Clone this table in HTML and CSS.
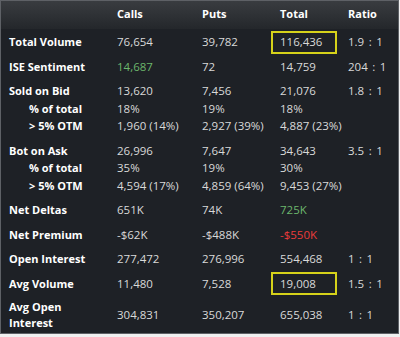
FILE: index.html
```html
<!DOCTYPE html>
<html>
<head>
<meta charset="utf-8">
<link rel="stylesheet" href="styles.css">
</head>
<body>
<div class="panel">
  <div class="row head">
    <div class="lbl"></div>
    <div>Calls</div><div>Puts</div><div>Total</div><div>Ratio</div>
  </div>
  <div class="group">
    <div class="row"><div class="lbl">Total Volume</div><div>76,654</div><div>39,782</div><div><span class="box">116,436</span></div><div class="ratio">1.9 : 1</div></div>
  </div>
  <div class="group">
    <div class="row"><div class="lbl">ISE Sentiment</div><div class="green">14,687</div><div>72</div><div>14,759</div><div class="ratio">204 : 1</div></div>
  </div>
  <div class="group">
    <div class="row"><div class="lbl">Sold on Bid</div><div>13,620</div><div>7,456</div><div>21,076</div><div class="ratio">1.8 : 1</div></div>
    <div class="row"><div class="lbl sub">% of total</div><div>18%</div><div>19%</div><div>18%</div><div></div></div>
    <div class="row"><div class="lbl sub">&gt; 5% OTM</div><div>1,960 (14%)</div><div>2,927 (39%)</div><div>4,887 (23%)</div><div></div></div>
  </div>
  <div class="group">
    <div class="row"><div class="lbl">Bot on Ask</div><div>26,996</div><div>7,647</div><div>34,643</div><div class="ratio">3.5 : 1</div></div>
    <div class="row"><div class="lbl sub">% of total</div><div>35%</div><div>19%</div><div>30%</div><div></div></div>
    <div class="row"><div class="lbl sub">&gt; 5% OTM</div><div>4,594 (17%)</div><div>4,859 (64%)</div><div>9,453 (27%)</div><div></div></div>
  </div>
  <div class="group">
    <div class="row"><div class="lbl">Net Deltas</div><div>651K</div><div>74K</div><div class="green">725K</div><div></div></div>
  </div>
  <div class="group">
    <div class="row"><div class="lbl">Net Premium</div><div>-$62K</div><div>-$488K</div><div class="red">-$550K</div><div></div></div>
  </div>
  <div class="group">
    <div class="row"><div class="lbl">Open Interest</div><div>277,472</div><div>276,996</div><div>554,468</div><div class="ratio">1 : 1</div></div>
  </div>
  <div class="group">
    <div class="row"><div class="lbl">Avg Volume</div><div>11,480</div><div>7,528</div><div><span class="box">19,008</span></div><div class="ratio">1.5 : 1</div></div>
  </div>
  <div class="group">
    <div class="row two"><div class="lbl">Avg Open<br>Interest</div><div>304,831</div><div>350,207</div><div>655,038</div><div class="ratio">1 : 1</div></div>
  </div>
</div>
</body>
</html>
```
FILE: styles.css
```css
html, body {
  margin: 0;
  padding: 0;
  background: #f0f0f0;
}
.panel {
  width: 397px;
  height: 332px;
  border: 1px solid #5e6166;
  background: #1e2126;
  font-family: "Open Sans", "DejaVu Sans", sans-serif;
  font-size: 11.5px;
  color: #d9d9d9;
  overflow: hidden;
}
.row {
  display: grid;
  grid-template-columns: 116px 85px 78px 68px 1fr;
  height: 17.5px;
  line-height: 17.5px;
  align-items: center;
  white-space: nowrap;
}
.head {
  height: 25px;
  line-height: 25px;
  background: linear-gradient(#393c40, #24272b);
  color: #ffffff;
  font-weight: bold;
  font-size: 11px;
  padding-bottom: 3px;
}
.group {
  padding-top: 4.25px;
  padding-bottom: 2.75px;
}
.lbl {
  padding-left: 8px;
  color: #ffffff;
  font-weight: bold;
  font-size: 11px;
}
.lbl.sub {
  padding-left: 28px;
}
.ratio {
  word-spacing: 1.5px;
}
.two {
  height: 32px;
  line-height: 16px;
}
.green { color: #6cb66c; }
.red { color: #ec3b3b; }
.box {
  position: relative;
}
.box::after {
  content: "";
  position: absolute;
  left: -9px;
  top: -3.5px;
  width: 66px;
  height: 23px;
  border: 2px solid #d6d21a;
  box-sizing: border-box;
}
```
